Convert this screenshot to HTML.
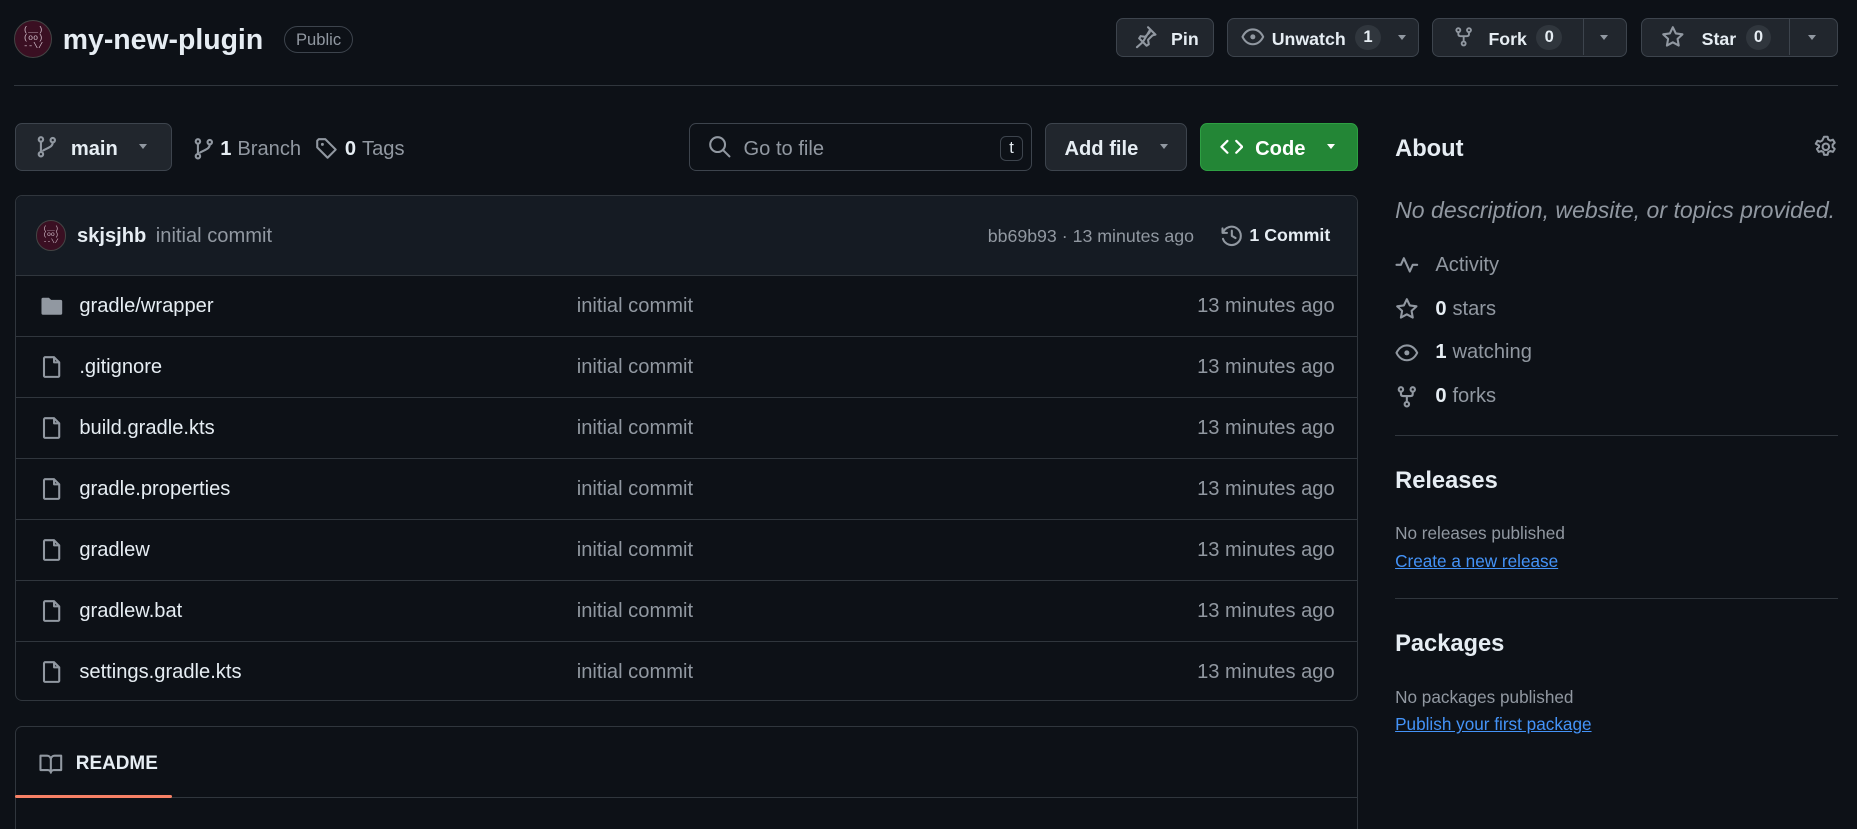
<!DOCTYPE html>
<html><head><meta charset="utf-8"><style>
*{box-sizing:border-box;margin:0;padding:0}
html,body{width:1857px;height:829px;overflow:hidden;background:#0d1117}
#z{zoom:1.1843;width:1568px;height:700px;position:relative;font-family:"Liberation Sans",sans-serif;color:#e6edf3;font-size:16px}
.a{position:absolute}
svg{display:block}
.ic{fill:none;stroke:#9198a1;stroke-width:1.4;stroke-linecap:round;stroke-linejoin:round}
.btn{position:absolute;background:#21262d;border:1px solid #3d444d;border-radius:6px;display:flex;align-items:center;font-weight:bold;font-size:15px;color:#e6edf3}
.btn span.tx{position:relative;top:2px}
.cnt{background:#30363d;border-radius:12px;padding:2px 7px;font-size:14px;margin-left:8px}
.caret{width:0;height:0;border-left:4px solid transparent;border-right:4px solid transparent;border-top:5px solid #9198a1}
.muted{color:#9198a1}
.row{position:absolute;left:13px;width:1134px;height:51.5px;border-top:1px solid #30363d;display:flex;align-items:center;font-size:17px}
.row .n{position:absolute;left:54px;top:16px}
.row .c{position:absolute;left:474px;color:#9198a1;top:16px}
.row .t{position:absolute;right:20px;color:#9198a1;top:16px}
.row svg{position:absolute;left:21px}
.av{border-radius:50%;background:#3a0f22;border:1px solid #444;color:#d6c3cf;font-family:"Liberation Mono",monospace;display:flex;align-items:center;justify-content:center;text-align:center;line-height:1}
.side{position:absolute;left:1178px;color:#9198a1;font-size:17px;display:flex;align-items:center}
.side svg{margin-right:14px}
.side b{color:#e6edf3;margin-right:5px}
h2{position:absolute;left:1178px;font-size:20px;font-weight:bold;color:#e6edf3}
.lnk{position:absolute;left:1178px;color:#4493f8;text-decoration:underline;font-size:14.5px}
.sm{position:absolute;left:1178px;color:#9198a1;font-size:14.5px}
.hr{position:absolute;left:1178px;width:374px;height:1px;background:#30363d}
</style></head><body><div id="z">
<div class="a av" style="left:12px;top:17px;width:32px;height:32px;font-size:7px">(__)<br>(oo)<br>--\/</div>
<div class="a" style="left:53px;top:20px;font-size:24px;font-weight:bold">my-new-plugin</div>
<div class="a muted" style="left:240px;top:22px;width:58px;height:23px;border:1px solid #3d444d;border-radius:12px;font-size:14px;text-align:center;line-height:22px">Public</div>

<div class="btn" style="left:942px;top:15px;width:83px;height:33px;padding-left:15px">
<svg width="20" height="20" viewBox="0 0 16 16"><path class="ic" d="M9.5 1.5l5 5-2 .5-3 3 .5 3-1.5 1L6 11.5 2 15M6 11.5L3.5 9l1-1.5 3 .5 3-3 .5-2z"/></svg><span class="tx" style="margin-left:11px">Pin</span></div>
<div class="btn" style="left:1036px;top:15px;width:162px;height:33px;padding-left:11px">
<svg width="20" height="20" viewBox="0 0 16 16"><path class="ic" d="M1 8c1.5-3 4-5 7-5s5.5 2 7 5c-1.5 3-4 5-7 5S2.5 11 1 8z"/><circle cx="8" cy="8" r="1.7" fill="#9198a1"/></svg><span class="tx" style="margin-left:6px">Unwatch</span><span class="cnt">1</span><span class="caret" style="margin-left:14px"></span></div>
<div class="btn" style="left:1209px;top:15px;width:165px;height:33px;padding-left:17px">
<svg width="18" height="20" viewBox="0 0 16 16"><circle class="ic" cx="4" cy="3" r="1.5"/><circle class="ic" cx="12" cy="3" r="1.5"/><circle class="ic" cx="8" cy="13" r="1.5"/><path class="ic" d="M4 4.5v1.5c0 1 .5 1.5 1.5 1.5h5c1 0 1.5-.5 1.5-1.5V4.5M8 7.5v4"/></svg><span class="tx" style="margin-left:12px">Fork</span><span class="cnt">0</span>
<span class="a" style="left:127px;top:0;width:1px;height:31px;background:#3d444d"></span><span class="caret a" style="left:141px;top:14px"></span></div>
<div class="btn" style="left:1386px;top:15px;width:166px;height:33px;padding-left:16px">
<svg width="20" height="20" viewBox="0 0 16 16"><path class="ic" d="M8 1.5l2 4.2 4.5.6-3.3 3.1.8 4.5L8 11.7l-4 2.2.8-4.5L1.5 6.3 6 5.7z"/></svg><span class="tx" style="margin-left:14px">Star</span><span class="cnt">0</span>
<span class="a" style="left:124px;top:0;width:1px;height:31px;background:#3d444d"></span><span class="caret a" style="left:140px;top:14px"></span></div>
<div class="a" style="left:12px;top:72px;width:1540px;height:1px;background:#30363d"></div>

<div class="btn" style="left:13px;top:104px;width:132px;height:40px;padding-left:16px;font-size:17px">
<svg width="20" height="20" viewBox="0 0 16 16"><circle class="ic" cx="4" cy="3" r="1.5"/><circle class="ic" cx="12" cy="3.5" r="1.5"/><circle class="ic" cx="4" cy="13" r="1.5"/><path class="ic" d="M4 4.5v7M12 5c0 3-3 3.5-6.5 5.5"/></svg><span class="tx" style="margin-left:10px">main</span><span class="caret" style="margin-left:18px"></span></div>
<div class="a" style="left:162px;top:116px;display:flex;align-items:center;font-size:17px;color:#9198a1">
<svg width="20" height="20" viewBox="0 0 16 16"><circle class="ic" cx="4" cy="3" r="1.5"/><circle class="ic" cx="12" cy="3.5" r="1.5"/><circle class="ic" cx="4" cy="13" r="1.5"/><path class="ic" d="M4 4.5v7M12 5c0 3-3 3.5-6.5 5.5"/></svg><b style="color:#e6edf3;margin:0 5px 0 4px">1</b>Branch
<svg style="margin-left:12px" width="20" height="20" viewBox="0 0 16 16"><path class="ic" d="M1.5 2.5v4.5l7 7 5.5-5.5-7-7H2.5z"/><circle cx="5" cy="5" r="1" fill="#9198a1"/></svg><b style="color:#e6edf3;margin:0 5px 0 5px">0</b>Tags</div>

<div class="a" style="left:582px;top:104px;width:289px;height:40px;border:1px solid #3d444d;border-radius:6px;display:flex;align-items:center;padding-left:15px;color:#9198a1;font-size:17px">
<svg width="20" height="20" viewBox="0 0 16 16"><circle class="ic" cx="6.5" cy="6.5" r="5"/><path class="ic" d="M10 10l4.5 4.5"/></svg><span style="margin-left:10px;position:relative;top:2px">Go to file</span>
<span class="a" style="right:6px;top:10px;width:20px;height:21px;border:1px solid #3d444d;border-radius:5px;font-size:14px;color:#e6edf3;text-align:center;line-height:19px">t</span></div>
<div class="btn" style="left:882px;top:104px;width:120px;height:40px;padding-left:16px;font-size:17px"><span class="tx">Add file</span><span class="caret" style="margin-left:18px"></span></div>
<div class="btn" style="left:1013px;top:104px;width:134px;height:40px;padding-left:16px;font-size:17px;background:#238636;border-color:#2ea043;color:#fff">
<svg width="20" height="20" viewBox="0 0 16 16"><path d="M5 4L1 8l4 4M11 4l4 4-4 4" fill="none" stroke="#fff" stroke-width="1.5" stroke-linecap="round" stroke-linejoin="round"/></svg><span class="tx" style="margin-left:10px">Code</span><span class="caret" style="margin-left:18px;border-top-color:#fff"></span></div>

<div class="a" style="left:13px;top:165px;width:1134px;height:427px;border:1px solid #30363d;border-radius:6px;overflow:hidden">
<div style="height:67px;background:#151b23"></div></div>
<div class="a av" style="left:30px;top:186px;width:26px;height:26px;font-size:5.5px">(__)<br>(oo)<br>--\/</div>
<div class="a" style="left:65px;top:190px;font-size:17px"><b>skjsjhb</b><span class="muted" style="margin-left:8px">initial commit</span></div>
<div class="a muted" style="left:834px;top:191px;font-size:15px">bb69b93 · 13 minutes ago</div>
<div class="a" style="left:1030px;top:189px;display:flex;align-items:center;font-size:15px;font-weight:bold">
<svg width="20" height="20" viewBox="0 0 16 16"><path class="ic" d="M1.7 3v3h3M2 6a6.2 6.2 0 1 1 0 4"/><path class="ic" d="M8 4.5V8l2.5 1.5"/></svg><span style="margin-left:5px">1 Commit</span></div>

<div class="row" style="top:232px"><svg width="20" height="20" viewBox="0 0 16 16"><path d="M1 3.5c0-.6.4-1 1-1h4l1.5 1.5H14c.6 0 1 .4 1 1v8c0 .6-.4 1-1 1H2c-.6 0-1-.4-1-1z" fill="#9198a1"/></svg><span class="n">gradle/wrapper</span><span class="c">initial commit</span><span class="t">13 minutes ago</span></div>
<div class="row" style="top:283.5px"><svg width="20" height="20" viewBox="0 0 16 16"><path class="ic" d="M3.5 1.5h6l3.5 3.5v9a.8.8 0 0 1-.8.8H3.5a.8.8 0 0 1-.8-.8V2.3a.8.8 0 0 1 .8-.8zM9.5 1.5V5H13"/></svg><span class="n">.gitignore</span><span class="c">initial commit</span><span class="t">13 minutes ago</span></div>
<div class="row" style="top:335px"><svg width="20" height="20" viewBox="0 0 16 16"><path class="ic" d="M3.5 1.5h6l3.5 3.5v9a.8.8 0 0 1-.8.8H3.5a.8.8 0 0 1-.8-.8V2.3a.8.8 0 0 1 .8-.8zM9.5 1.5V5H13"/></svg><span class="n">build.gradle.kts</span><span class="c">initial commit</span><span class="t">13 minutes ago</span></div>
<div class="row" style="top:386.5px"><svg width="20" height="20" viewBox="0 0 16 16"><path class="ic" d="M3.5 1.5h6l3.5 3.5v9a.8.8 0 0 1-.8.8H3.5a.8.8 0 0 1-.8-.8V2.3a.8.8 0 0 1 .8-.8zM9.5 1.5V5H13"/></svg><span class="n">gradle.properties</span><span class="c">initial commit</span><span class="t">13 minutes ago</span></div>
<div class="row" style="top:438px"><svg width="20" height="20" viewBox="0 0 16 16"><path class="ic" d="M3.5 1.5h6l3.5 3.5v9a.8.8 0 0 1-.8.8H3.5a.8.8 0 0 1-.8-.8V2.3a.8.8 0 0 1 .8-.8zM9.5 1.5V5H13"/></svg><span class="n">gradlew</span><span class="c">initial commit</span><span class="t">13 minutes ago</span></div>
<div class="row" style="top:489.5px"><svg width="20" height="20" viewBox="0 0 16 16"><path class="ic" d="M3.5 1.5h6l3.5 3.5v9a.8.8 0 0 1-.8.8H3.5a.8.8 0 0 1-.8-.8V2.3a.8.8 0 0 1 .8-.8zM9.5 1.5V5H13"/></svg><span class="n">gradlew.bat</span><span class="c">initial commit</span><span class="t">13 minutes ago</span></div>
<div class="row" style="top:541px"><svg width="20" height="20" viewBox="0 0 16 16"><path class="ic" d="M3.5 1.5h6l3.5 3.5v9a.8.8 0 0 1-.8.8H3.5a.8.8 0 0 1-.8-.8V2.3a.8.8 0 0 1 .8-.8zM9.5 1.5V5H13"/></svg><span class="n">settings.gradle.kts</span><span class="c">initial commit</span><span class="t">13 minutes ago</span></div>

<div class="a" style="left:13px;top:613px;width:1134px;height:120px;border:1px solid #30363d;border-radius:6px"></div>
<div class="a" style="left:14px;top:673px;width:1132px;height:1px;background:#30363d"></div>
<div class="a" style="left:13px;top:671px;width:132px;height:3px;background:#f78166;border-radius:2px"></div>
<div class="a" style="left:33px;top:635px;display:flex;align-items:center;font-size:16px;font-weight:bold">
<svg width="20" height="20" viewBox="0 0 16 16"><path class="ic" d="M1 2.5h4.5c1.3 0 2.5 1 2.5 2.5v9c0-1-1-1.8-2-1.8H1zM15 2.5h-4.5C9.2 2.5 8 3.5 8 5v9c0-1 1-1.8 2-1.8h5z"/></svg><span style="margin-left:11px">README</span></div>

<h2 style="top:115px">About</h2>
<svg class="a" style="left:1532px;top:114px" width="20" height="20" viewBox="0 0 16 16"><circle class="ic" cx="8" cy="8" r="2.2"/><path class="ic" d="M6.8 1.2h2.4l.4 1.8 1.4.8 1.8-.6 1.2 2-1.4 1.3v1.6l1.4 1.3-1.2 2-1.8-.6-1.4.8-.4 1.8H6.8l-.4-1.8-1.4-.8-1.8.6-1.2-2 1.4-1.3V7.2L1.2 5.9l1.2-2 1.8.6 1.4-.8z"/></svg>
<div class="a muted" style="left:1178px;top:166px;font-size:19.5px;font-style:italic">No description, website, or topics provided.</div>
<div class="side" style="top:214px"><svg width="20" height="20" viewBox="0 0 16 16"><path class="ic" d="M1 8h3l2-4.5 4 9L12 8h3"/></svg>Activity</div>
<div class="side" style="top:251px"><svg width="20" height="20" viewBox="0 0 16 16"><path class="ic" d="M8 1.5l2 4.2 4.5.6-3.3 3.1.8 4.5L8 11.7l-4 2.2.8-4.5L1.5 6.3 6 5.7z"/></svg><b>0</b>stars</div>
<div class="side" style="top:288px"><svg width="20" height="20" viewBox="0 0 16 16"><path class="ic" d="M1 8c1.5-3 4-5 7-5s5.5 2 7 5c-1.5 3-4 5-7 5S2.5 11 1 8z"/><circle cx="8" cy="8" r="1.7" fill="#9198a1"/></svg><b>1</b>watching</div>
<div class="side" style="top:325px"><svg width="20" height="20" viewBox="0 0 16 16"><circle class="ic" cx="4" cy="3" r="1.5"/><circle class="ic" cx="12" cy="3" r="1.5"/><circle class="ic" cx="8" cy="13" r="1.5"/><path class="ic" d="M4 4.5v1.5c0 1 .5 1.5 1.5 1.5h5c1 0 1.5-.5 1.5-1.5V4.5M8 7.5v4"/></svg><b>0</b>forks</div>
<div class="hr" style="top:367px"></div>
<h2 style="top:395px">Releases</h2>
<div class="sm" style="top:442px">No releases published</div>
<div class="lnk" style="top:465px">Create a new release</div>
<div class="hr" style="top:505px"></div>
<h2 style="top:533px">Packages</h2>
<div class="sm" style="top:580px">No packages published</div>
<div class="lnk" style="top:603px">Publish your first package</div>
</div></body></html>
